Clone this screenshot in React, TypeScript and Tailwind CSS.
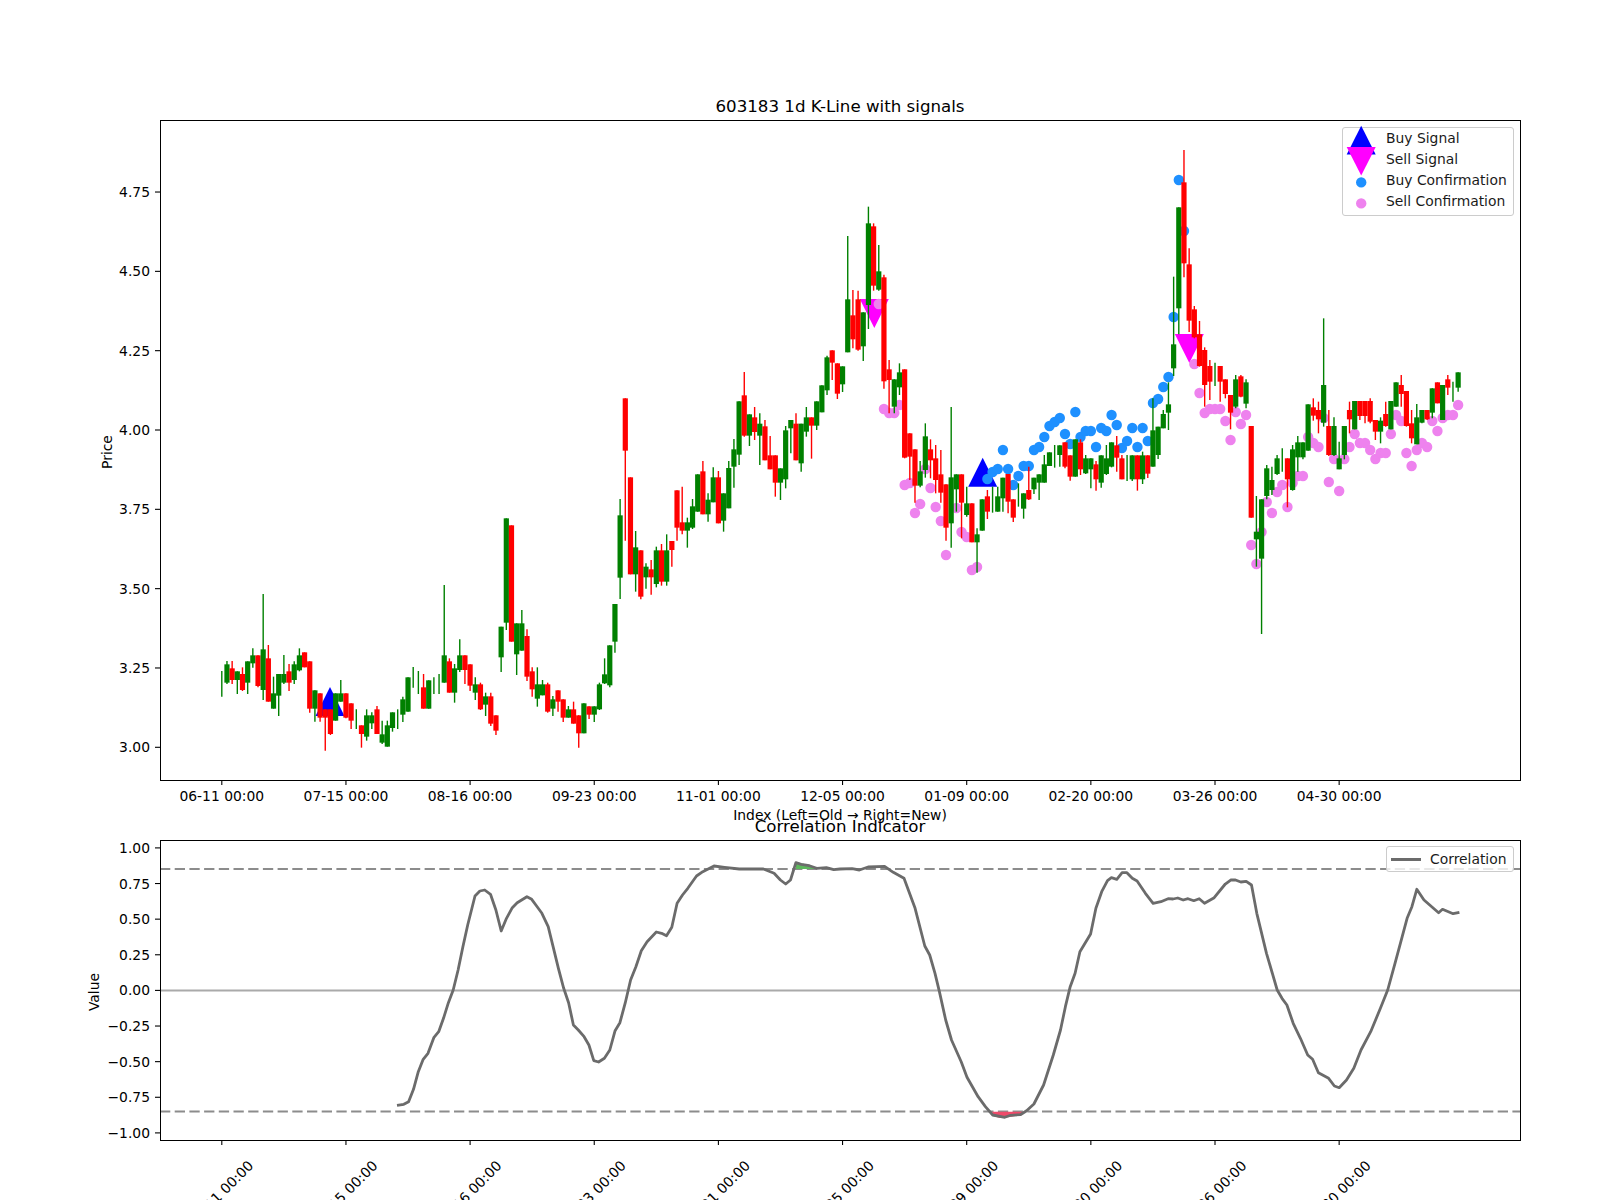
// 603183 daily k-line with signal markers and the correlation indicator below it

type Row = [string, number, number, number, number];

// g/r, wick top, wick bottom, body top, body bottom. Read at 3x, base is the page y of zero.
const part1: Row[] = [
  ["g",513,590,0,0],["g",483,552,493,548],["r",483,552,505,540],["g",514,582,514,540],["r",502,573,522,570],["g",484,582,484,548],
  ["g",445,503,466,490],["r",466,562,466,558],["g",282,600,448,570],["r",435,605,475,605],["g",530,626,580,626],["g",522,648,522,587],
  ["g",465,552,522,548],["r",492,573,514,548],["g",484,552,493,540],["g",445,514,466,511],["r",457,502,457,502],["r",484,638,484,626],
  ["g",571,665,571,626],["r",580,665,580,653],["r",628,752,628,653],["r",628,705,628,702],["g",580,662,580,662],["g",540,605,580,605],
  ["r",580,655,580,653],["r",610,687,610,662],["g",628,687,0,0],["r",676,743,676,702],["g",628,722,646,710],["g",637,687,646,670],
  ["r",618,702,628,702],["g",662,732,703,728],["g",662,740,676,740],["g",637,695,637,684],["g",628,687,0,0],["g",590,666,598,644],
  ["g",532,635,532,635],["g",501,563,0,0],["g",513,582,0,0],["r",522,626,562,626],["g",541,626,541,626],["g",532,582,0,0],
  ["g",522,582,0,0],["g",255,548,466,548],["r",475,578,484,578],["g",492,608,505,578],["g",418,516,466,510],["r",466,552,466,510],
  ["r",493,573,493,557],["g",532,600,553,578],["r",548,630,553,628],["g",578,648,589,614],["r",578,678,589,671],["r",646,705,646,692],
  ["g",380,516,380,472],["g",55,390,55,368],["r",76,425,76,425],["g",370,525,370,463],["g",330,452,370,452],["r",388,543,408,530],
  ["r",502,590,514,568],["g",502,620,553,596],["g",540,586,553,586],["r",548,638,553,635],["g",588,648,598,626],["r",571,635,571,605],
  ["r",598,666,598,653],["g",618,653,628,653],["r",605,671,628,671],["r",646,743,646,700],["g",610,700,610,700],["r",619,657,619,644],
  ["g",619,666,619,644],["g",548,630,553,628],["g",475,552,523,550],["g",436,562,436,556],["g",312,458,312,425],
];
const part2: Row[] = [
  ["g",897,1197,946,1133],["r",595,1022,595,752],["r",832,1123,832,1123],["g",993,1175,1042,1123],["r",1051,1198,1051,1190],["g",1090,1166,1100,1132],
  ["r",1080,1184,1108,1132],["g",1040,1162,1051,1152],["r",1032,1157,1051,1145],["g",1003,1157,1051,1145],["r",1023,1100,1023,1050],["r",871,1022,871,983],
  ["r",860,1003,967,992],["g",953,1043,967,992],["g",897,987,919,983],["g",823,935,823,935],["r",783,943,814,943],["g",880,965,899,943],
  ["g",802,907,832,907],["r",813,970,832,970],["g",880,995,880,962],["g",783,925,804,925],["g",717,863,748,800],["g",604,795,604,764],
  ["r",516,710,586,707],["g",643,738,643,707],["r",621,720,652,696],["g",640,795,671,707],["r",660,781,679,781],["r",708,808,766,808],
  ["r",766,890,766,848],["g",805,900,805,848],["g",678,865,691,838],["g",660,760,660,685],["r",640,781,671,781],["g",671,815,671,790],
  ["g",621,710,652,695],["r",652,776,652,677],["g",604,690,604,677],["g",556,637,556,637],["g",467,585,472,571],["r",451,540,451,488],
  ["r",490,597,490,581],["g",499,576,499,553],["g",108,457,298,457],["r",270,445,346,418],["r",272,452,298,449],["g",337,483,337,439],
  ["g",20,387,70,315],["r",70,272,79,257],["g",135,272,214,269],["r",224,566,232,544],["r",480,640,508,540],["g",538,640,538,620],
  ["g",490,585,517,562],["r",508,775,508,773],["r",700,840,700,770],["r",748,908,748,857],["g",783,862,814,857],["g",670,833,709,810],
  ["r",718,835,748,781],["r",735,880,775,840],["r",750,908,823,878],["r",853,1022,853,983],["g",621,1043,832,970],["g",823,935,823,868],
  ["r",823,1015,823,908],["g",860,950,910,945],["r",910,1027,910,1027],["g",985,1118,1003,1027],["g",898,992,898,992],["r",870,957,889,935],
  ["g",860,938,0,0],
];
const part3: Row[] = [
  ["g",260,335,289,335],["g",233,335,233,295],["r",222,340,222,305],["r",298,366,298,353],["g",250,320,0,0],["g",280,356,280,326],
  ["r",200,300,270,298],["g",233,282,233,268],["g",223,300,223,248],["g",165,248,193,248],["g",157,198,157,198],["g",135,203,0,0],
  ["g",136,200,136,165],["r",127,205,127,200],["r",166,242,166,230],["g",118,230,118,230],["r",118,225,127,208],["g",165,222,175,220],
  ["g",175,265,175,208],["r",183,272,193,238],["g",166,263,166,248],["g",135,225,175,222],["g",127,202,127,200],["r",108,215,136,173],
  ["r",165,238,175,238],["g",165,243,0,0],["g",166,243,166,238],["r",166,272,166,238],["g",155,252,166,238],["r",166,234,166,221],
  ["g",-5,200,91,200],["g",80,177,80,165],["g",30,85,42,85],["g",-53,90,13,38],["g",-370,-72,-167,-95],["g",-578,-197,-578,-275],
  ["r",-750,-368,-653,-410],["r",-455,-204,-407,-238],["r",-282,-185,-272,-188],["r",-237,-100,-197,-102],["r",-158,20,-150,-45],["r",-120,0,-102,-55],
  ["g",-112,-42,0,0],["r",-102,5,-102,-55],["r",-62,-5,-62,-18],["r",-15,88,-15,38],["g",-75,25,-62,20],["r",-75,-8,-71,-10],
  ["g",-62,25,-53,11],["r",78,353,78,353],["g",288,500,395,418],["g",298,702,298,476],["g",195,298,205,288],["g",200,285,240,270],
  ["g",165,225,175,222],["g",145,215,0,0],["r",175,322,175,238],["g",135,272,148,270],["g",108,215,127,172],["g",127,178,127,172],
  ["g",13,152,13,152],["r",-5,62,22,47],["r",5,100,30,58],["g",-245,80,-45,68],["r",30,168,78,165],["g",52,168,78,165],
  ["g",125,208,175,208],["g",78,178,78,165],["r",5,100,30,58],["g",3,88,3,88],["r",3,60,3,48],["r",3,70,3,48],
  ["r",-5,70,3,65],["r",60,120,60,95],["g",52,130,62,95],["r",5,80,42,78],["g",3,88,3,88],["g",-53,20,-53,20],
  ["r",-75,20,-45,-18],["r",-27,80,-27,78],["r",30,130,70,115],["g",12,133,52,133],["g",30,70,30,68],["r",30,60,30,58],
  ["g",-35,55,-35,38],["r",-53,10,-53,10],["g",-45,60,-45,60],["r",-75,-15,-62,-37],["g",-55,5,0,0],["g",-83,-25,-83,-37],
];

const candles = [
  ...part1.map((r) => ({ r, base: 500 })),
  ...part2.map((r) => ({ r, base: 200 })),
  ...part3.map((r) => ({ r, base: 400 })),
];

const dx = 5.173;
const xAt = (i: number) => 221.8 + dx * i;
const tickX = (k: number) => 221.8 + 124.15 * k;
const priceY = (p: number) => 747.3 - (p - 3) * 317.3;
const corrY = (v: number) => 990.4 - 142.5 * v;

const dates = ["06-11", "07-15", "08-16", "09-23", "11-01", "12-05", "01-09", "02-20", "03-26", "04-30"];
const prices = [3, 3.25, 3.5, 3.75, 4, 4.25, 4.5, 4.75];
const corrTicks = [1, 0.75, 0.5, 0.25, 0, -0.25, -0.5, -0.75, -1];

// buy confirmations start at candle 148
const buyDots = [479,472,469,450,469,485,476,466,466,450,447,437,426,422,418,434,444,412,437,431,431,447,428,431,415,425,448,441,428,447,428,441,403,399,387,377,317,180,231];
// [candle, y]
const sellDots: [number, number][] = [
  [127,304],[128,409],[129,413],[130,413],[131,405],[132,485],[133,483],[134,513],[135,504],[136,469],[137,488],[138,507],[139,521],[140,555],[142,508],[143,532],[144,537],[145,570],[146,567],
  [188,364],[189,393],[190,413],[191,409],[192,409],[193,409],[194,421],[195,440],[196,412],[197,424],[198,415],[199,545],[200,564],[201,532],[202,502],[203,513],[204,492],[205,485],[206,507],[207,483],[208,476],[209,476],[210,437],[211,443],[212,447],[213,418],[214,482],[215,459],[216,491],[217,459],[218,447],[219,434],[220,443],[221,443],[222,450],[223,459],[224,453],[225,453],[226,434],[227,415],[228,421],[229,453],[230,466],[231,450],[232,443],[233,447],[234,421],[235,431],[236,418],[237,415],[238,415],[239,405],
];

const leftCurve = [654,856,668,853,678,845,688,808,698,755,708,718,718,700,730,653,740,635,750,595,760,548,770,510,780,450,790,380,800,315,815,228,825,213,835,210,847,223,858,270,869,333,880,295,892,263,902,248,922,230,932,238,942,258,953,280,966,320,976,380,987,445,998,505,1008,548,1018,615,1028,630,1040,650,1050,675,1060,722,1070,726,1082,715,1093,690,1104,632,1114,608,1125,548,1136,480,1147,440,1158,392,1170,365,1189,336,1200,340,1210,347,1221,322,1232,250,1243,225,1254,205,1272,168,1285,155,1308,138,1330,142,1360,147,1410,147,1432,160,1445,180,1456,192,1466,180,1477,128,1488,133,1505,137,1520,145,1540,143,1555,149];
const rightCurve = [0,147,25,146,40,150,58,141,92,139,110,157,132,175,155,265,175,378,185,405,196,460,205,515,218,600,230,660,250,725,262,772,285,830,300,860,315,885,340,892,352,886,372,884,385,872,400,852,420,795,440,705,455,630,465,560,475,500,485,460,495,395,517,342,528,265,540,215,552,182,560,173,571,178,582,158,592,158,603,175,613,183,630,220,646,250,662,245,677,236,687,237,697,234,708,240,718,236,730,242,741,236,752,250,772,233,795,192,806,180,816,180,827,186,838,184,849,195,860,280,880,400,902,510,912,535,922,555,935,610,950,655,965,705,975,718,987,758,1008,775,1020,798,1030,803,1045,780,1060,745,1075,690,1095,635,1115,565,1130,510,1145,430,1160,350,1170,295,1180,260,1190,208,1205,240,1222,262,1235,278,1243,268,1265,281,1278,277];

function toPoints(raw: number[], left: number) {
  const out: string[] = [];
  for (let n = 0; n < raw.length; n += 2) {
    out.push(`${(left + raw[n] / 2.0632).toFixed(1)},${(820 + raw[n + 1] / 3).toFixed(1)}`);
  }
  return out.join(" ");
}
const corrLine = toPoints(leftCurve, 80) + " " + toPoints(rightCurve, 840);

function Triangle({ x, y, down, color }: { x: number; y: number; down?: boolean; color: string }) {
  // x is the middle, y the flat side
  const tip = down ? y + 29 : y - 29;
  return <polygon points={`${x - 14.5},${y} ${x + 14.5},${y} ${x},${tip}`} fill={color} />;
}

function Candle({ i, r, base }: { i: number; r: Row; base: number }) {
  const [c, hi, lo, top, bot] = r;
  const color = c === "g" ? "#008000" : "#ff0000";
  const x = xAt(i);
  return (
    <g>
      <line x1={x} x2={x} y1={base + hi / 3} y2={base + lo / 3} stroke={color} strokeWidth={1.4} />
      {bot !== top && <rect x={x - 2.6} y={base + top / 3} width={5.2} height={(bot - top) / 3} fill={color} />}
    </g>
  );
}

function LegendRow({ label, children }: { label: string; children: React.ReactNode }) {
  return (
    <div className="flex h-[21px] items-center">
      <svg width="43" height="21" viewBox="0 0 43 21" className="shrink-0 overflow-visible">
        {children}
      </svg>
      <span>{label}</span>
    </div>
  );
}

function PriceChart() {
  return (
    <div className="relative h-[660px] w-[1360px]">
      <svg width="1360" height="660" viewBox="160 120 1360 660" className="block overflow-visible text-[13.89px]">
        <text x="840" y="112" textAnchor="middle" className="text-[16.67px]">603183 1d K-Line with signals</text>
        <text x="840" y="820" textAnchor="middle">Index (Left=Old → Right=New)</text>
        <text x="107" y="452" textAnchor="middle" dominantBaseline="central" transform="rotate(-90 107 452)">Price</text>

        {prices.map((p) => (
          <g key={p}>
            <line x1="155" x2="160" y1={priceY(p)} y2={priceY(p)} stroke="#000" strokeWidth={1.1} />
            <text x="150" y={priceY(p) + 5} textAnchor="end">{p.toFixed(2)}</text>
          </g>
        ))}
        {dates.map((d, k) => (
          <g key={d}>
            <line x1={tickX(k)} x2={tickX(k)} y1="780" y2="785" stroke="#000" strokeWidth={1.1} />
            <text x={tickX(k)} y="801" textAnchor="middle">{d} 00:00</text>
          </g>
        ))}

        <Triangle x={330} y={716} color="#0000ff" />
        <Triangle x={982.7} y={486.7} color="#0000ff" />
        <Triangle x={874.3} y={299} down color="#ff00ff" />
        <Triangle x={1189.3} y={334} down color="#ff00ff" />

        {buyDots.map((y, n) => (
          <circle key={n} cx={xAt(148 + n)} cy={y} r={5.2} fill="#1e90ff" />
        ))}
        {sellDots.map(([i, y]) => (
          <circle key={i} cx={xAt(i)} cy={y} r={5.2} fill="#ee82ee" />
        ))}

        {candles.map(({ r, base }, i) => (
          <Candle key={i} i={i} r={r} base={base} />
        ))}
      </svg>

      <div className="absolute -bottom-px -right-px left-0 top-0 border border-black" />

      <div className="absolute left-[1182px] top-[7px] h-[89px] w-[172px] rounded-[3px] border border-[#cccccc] bg-white/80 text-[13.89px] text-[#1a1a1a]">
        <LegendRow label="Buy Signal">
          <polygon points="3.7,26.4 32.7,26.4 18.2,-2.3" fill="#0000ff" />
        </LegendRow>
        <LegendRow label="Sell Signal">
          <polygon points="3.7,-2 32.7,-2 18.2,26.4" fill="#ff00ff" />
        </LegendRow>
        <LegendRow label="Buy Confirmation">
          <circle cx="18.2" cy="12.4" r="5.2" fill="#1e90ff" />
        </LegendRow>
        <LegendRow label="Sell Confirmation">
          <circle cx="18.2" cy="12.4" r="5.2" fill="#ee82ee" />
        </LegendRow>
      </div>
    </div>
  );
}

function CorrelationChart() {
  return (
    <div className="relative mt-[60px] h-[300px] w-[1360px]">
      <svg width="1360" height="300" viewBox="160 840 1360 300" className="block overflow-visible text-[13.89px]">
        <text x="840" y="832" textAnchor="middle" className="text-[16.67px]">Correlation Indicator</text>
        <text x="94" y="992" textAnchor="middle" dominantBaseline="central" transform="rotate(-90 94 992)">Value</text>

        {corrTicks.map((v) => (
          <g key={v}>
            <line x1="155" x2="160" y1={corrY(v)} y2={corrY(v)} stroke="#000" strokeWidth={1.1} />
            <text x="150" y={corrY(v) + 5} textAnchor="end">{v.toFixed(2).replace("-", "−")}</text>
          </g>
        ))}
        {dates.map((d, k) => (
          <g key={d}>
            <line x1={tickX(k)} x2={tickX(k)} y1="1140" y2="1145" stroke="#000" strokeWidth={1.1} />
            <text x={tickX(k) - 1} y="1198" textAnchor="middle" transform={`rotate(-45 ${tickX(k) - 1} 1193)`}>{d} 00:00</text>
          </g>
        ))}

        <line x1="160" x2="1520" y1="990.4" y2="990.4" stroke="#aaaaaa" strokeWidth={2} />
        <line x1="160" x2="1520" y1="869" y2="869" stroke="#8c8c8c" strokeWidth={2} strokeDasharray="10.3 4.4" />
        <line x1="160" x2="1520" y1="1111.5" y2="1111.5" stroke="#8c8c8c" strokeWidth={2} strokeDasharray="10.3 4.4" />

        <polygon points="796,869 796,862 800,863 808,865 815,868 818,869" fill="#5cb85c" />
        <polygon points="992,1111.7 1023,1111.7 1020,1115 1010,1117 1000,1118 993,1116" fill="#ef4a6a" />
        <polyline points={corrLine} fill="none" stroke="#6b6b6b" strokeWidth={2.8} strokeLinejoin="round" />
      </svg>

      <div className="absolute -bottom-px -right-px left-0 top-0 border border-black" />

      <div className="absolute left-[1226px] top-[6px] flex h-[26px] w-[128px] items-center rounded-[3px] border border-[#cccccc] bg-white/80 text-[13.89px] text-[#1a1a1a]">
        <div className="ml-[4px] mr-[9px] h-[3px] w-[30px] bg-[#6b6b6b]" />
        <span>Correlation</span>
      </div>
    </div>
  );
}

export default function App() {
  return (
    <div className="h-[1200px] w-[1600px] overflow-hidden bg-white pl-[160px] pt-[120px] font-['DejaVu_Sans',sans-serif]">
      <PriceChart />
      <CorrelationChart />
    </div>
  );
}
